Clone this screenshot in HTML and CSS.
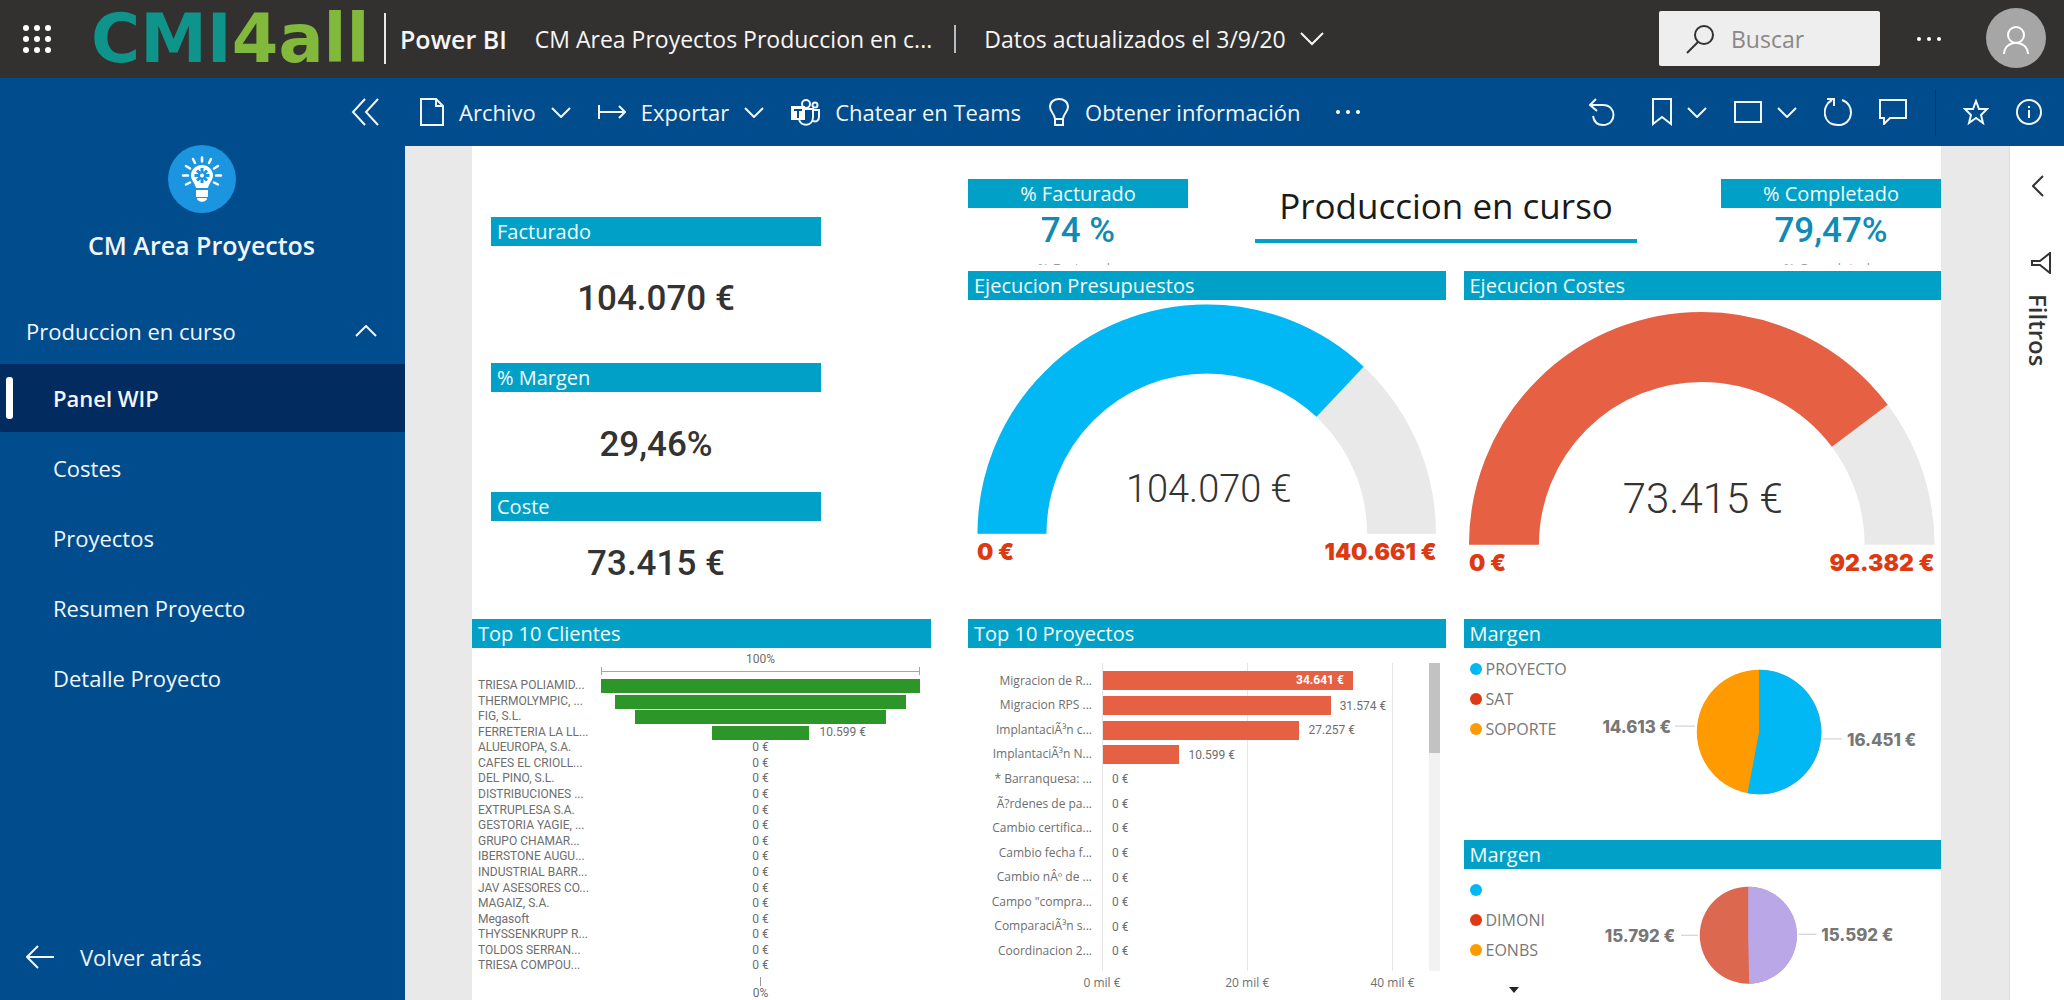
FILE: index.html
```html
<!DOCTYPE html>
<html lang="es">
<head>
<meta charset="utf-8">
<title>CM Area Proyectos - Power BI</title>
<meta name="viewport" content="width=device-width, initial-scale=1">
<link rel="stylesheet" href="styles.css">
</head>
<body>
<header class="topbar">
  <button class="icon-btn waffle" aria-label="Aplicaciones">
    <svg width="28" height="30" viewBox="0 0 28 30" fill="#fff"><circle cx="3" cy="4" r="3"/><circle cx="14" cy="4" r="3"/><circle cx="25" cy="4" r="3"/><circle cx="3" cy="15" r="3"/><circle cx="14" cy="15" r="3"/><circle cx="25" cy="15" r="3"/><circle cx="3" cy="26" r="3"/><circle cx="14" cy="26" r="3"/><circle cx="25" cy="26" r="3"/></svg>
  </button>
  <a class="logo" href="#"><span class="logo-cmi">CMI</span><span class="logo-all">4all</span></a>
  <a class="product" href="#">Power BI</a>
  <span class="report-name">CM Area Proyectos Produccion en c...</span>
  <button class="updated">Datos actualizados el 3/9/20
    <svg width="24" height="14" viewBox="0 0 24 14" class="line"><path d="M1 1l11 11L23 1"/></svg>
  </button>
  <label class="search">
    <svg width="28" height="30" viewBox="0 0 28 30" class="line"><circle cx="18" cy="11" r="9"/><path d="M12 18L1 29"/></svg>
    <input type="search" placeholder="Buscar" aria-label="Buscar">
  </label>
  <button class="icon-btn more" aria-label="Más opciones">
    <svg width="26" height="6" viewBox="0 0 26 6" fill="#fff"><circle cx="3" cy="3" r="2"/><circle cx="13" cy="3" r="2"/><circle cx="23" cy="3" r="2"/></svg>
  </button>
  <button class="icon-btn avatar" aria-label="Cuenta">
    <svg width="61" height="61" viewBox="0 0 61 61"><circle cx="30" cy="30" r="30" fill="#a6a6a6"/><g class="line"><circle cx="30" cy="27" r="8"/><path d="M18 46c1-15 23-15 24 0"/></g></svg>
  </button>
</header>

<div class="shell">
  <nav class="sidebar">
    <button class="icon-btn collapse" aria-label="Contraer">
      <svg width="28" height="28" viewBox="0 0 28 28" class="line"><path d="M14 1L2 14l12 13M27 1L15 14l12 13"/></svg>
    </button>
    <svg class="app-icon" width="68" height="68" viewBox="0 0 68 68"><circle cx="34" cy="34" r="34" fill="#1b95e0"/><g fill="#fff"><path d="M34 20c-6 0-11 4.500-11 10.500 0 5 4 7.500 5 12.500h12c1-5 5-7.500 5-12.500C45 24.500 40 20 34 20z"/><path d="M28 45h12v7H28zM29 53h10c0 5-10 5-10 0z"/></g><path d="M34 23v15M26.500 30.500h15M29 25.500l10 10M39 25.500l-10 10" stroke="#1b95e0" stroke-width="3"/><circle cx="34" cy="30.500" r="2" fill="#fff"/><g stroke="#fff" stroke-width="2.500" stroke-linecap="round"><path d="M34 12.500v4M25 14l2 4M43 14l-2 4M18 21l4 2.500M50 21l-4 2.500M15 30.500h5M48 30.500h5M18 39.500l4-2M50 39.500l-4-2"/></g></svg>
    <h1 class="app-name">CM Area Proyectos</h1>
    <button class="section">Produccion en curso
      <svg width="22" height="12" viewBox="0 0 22 12" class="line"><path d="M1 11L11 1l10 10"/></svg>
    </button>
    <ul class="pages">
      <li><a class="page current" href="#">Panel WIP</a></li>
      <li><a class="page" href="#">Costes</a></li>
      <li><a class="page" href="#">Proyectos</a></li>
      <li><a class="page" href="#">Resumen Proyecto</a></li>
      <li><a class="page" href="#">Detalle Proyecto</a></li>
    </ul>
    <a class="back" href="#">
      <svg width="28" height="24" viewBox="0 0 28 24" class="line"><path d="M28 12H2M12 1L1 12l11 11"/></svg>
      Volver atrás
    </a>
  </nav>

  <div class="content">
    <div class="toolbar">
      <button class="tool">
        <svg width="24" height="28" viewBox="0 0 24 28" class="line"><path d="M1 1h15l7 7v19H1zM16 1v7h7"/></svg>
        Archivo
        <svg width="20" height="11" viewBox="0 0 20 11" class="line"><path d="M1 1l9 9 9-9"/></svg>
      </button>
      <button class="tool">
        <svg width="28" height="14" viewBox="0 0 28 14" class="line"><path d="M1 0v14M1 7h26M21 1l6 6-6 6"/></svg>
        Exportar
        <svg width="20" height="11" viewBox="0 0 20 11" class="line"><path d="M1 1l9 9 9-9"/></svg>
      </button>
      <button class="tool">
        <svg width="29" height="27" viewBox="0 0 29 27" class="line"><circle cx="15" cy="5" r="4"/><circle cx="24" cy="6" r="2.500"/><path d="M13 10h9v8c0 10-13 10-14 2M22 11h6v7c0 4-3 5-6 4"/><path d="M0 7h14v14H0z" fill="#fff" stroke="none"/><path d="M3 11h8M7 11v8" stroke="#004c8c"/></svg>
        Chatear en Teams
      </button>
      <button class="tool">
        <svg width="22" height="28" viewBox="0 0 22 28" class="line"><path d="M7 21c0-5-5-7-5-12C2 4 6 1 11 1s9 3 9 8c0 5-5 7-5 12zM7 21v6h8v-6"/></svg>
        Obtener información
      </button>
      <button class="tool overflow" aria-label="Más">
        <svg width="26" height="6" viewBox="0 0 26 6" fill="#fff"><circle cx="3" cy="3" r="2"/><circle cx="13" cy="3" r="2"/><circle cx="23" cy="3" r="2"/></svg>
      </button>
      <div class="tools-right">
        <button class="tool undo" aria-label="Restablecer"><svg width="26" height="28" viewBox="0 0 26 28" class="line"><path d="M7 1L1 7l7 6M1 7h13c14 0 14 20 0 20-5 0-9-3-10-9"/></svg></button>
        <button class="tool" aria-label="Marcadores"><svg width="20" height="28" viewBox="0 0 20 28" class="line"><path d="M1 1h18v25l-9-7-9 7z"/></svg><svg width="20" height="11" viewBox="0 0 20 11" class="line"><path d="M1 1l9 9 9-9"/></svg></button>
        <button class="tool" aria-label="Vista"><svg width="28" height="22" viewBox="0 0 28 22" class="line"><path d="M1 1h26v20H1z"/></svg><svg width="20" height="11" viewBox="0 0 20 11" class="line"><path d="M1 1l9 9 9-9"/></svg></button>
        <button class="tool" aria-label="Actualizar"><svg width="28" height="28" viewBox="0 0 28 28" class="line"><path d="M18 2c13 4 12 25-4 25S-3 8 8 2M3 1h7v7"/></svg></button>
        <button class="tool comment" aria-label="Comentarios"><svg width="28" height="26" viewBox="0 0 28 26" class="line"><path d="M1 1h26v18H11l-6 6v-6H1z"/></svg></button>
        <button class="tool" aria-label="Favorito"><svg width="26" height="26" viewBox="0 0 26 26" class="line"><path d="M13 2l3 8h8l-6 6 2 8-7-5-7 5 2-8-6-6h8z"/></svg></button>
        <button class="tool" aria-label="Información"><svg width="26" height="26" viewBox="0 0 26 26" class="line"><circle cx="13" cy="13" r="12"/><path d="M13 11v8M13 7v2"/></svg></button>
      </div>
    </div>

    <div class="workspace">
      <main class="report">
        <div class="col-left">
          <section class="metric"><h2 class="bar-title">Facturado</h2><p class="number">104.070 €</p></section>
          <section class="metric"><h2 class="bar-title">% Margen</h2><p class="number">29,46%</p></section>
          <section class="metric"><h2 class="bar-title">Coste</h2><p class="number">73.415 €</p></section>

          <section class="clients">
            <h2 class="bar-title">Top 10 Clientes</h2>
            <div class="funnel">
              <div class="funnel-top">100%<span class="bracket"></span></div>
              <ul class="funnel-rows">
                <li><span class="name">TRIESA POLIAMID...</span><span class="lane"><i class="fill" style="width:100%"></i></span></li>
                <li><span class="name">THERMOLYMPIC, ...</span><span class="lane"><i class="fill" style="width:91.200%"></i></span></li>
                <li><span class="name">FIG, S.L.</span><span class="lane"><i class="fill" style="width:78.700%"></i></span></li>
                <li><span class="name">FERRETERIA LA LL...</span><span class="lane"><b class="side"></b><i class="fill" style="width:30.700%"></i><b class="side">10.599 €</b></span></li>
                <li><span class="name">ALUEUROPA, S.A.</span><span class="lane">0 €</span></li>
                <li><span class="name">CAFES EL CRIOLL...</span><span class="lane">0 €</span></li>
                <li><span class="name">DEL PINO, S.L.</span><span class="lane">0 €</span></li>
                <li><span class="name">DISTRIBUCIONES ...</span><span class="lane">0 €</span></li>
                <li><span class="name">EXTRUPLESA S.A.</span><span class="lane">0 €</span></li>
                <li><span class="name">GESTORIA YAGIE, ...</span><span class="lane">0 €</span></li>
                <li><span class="name">GRUPO CHAMAR...</span><span class="lane">0 €</span></li>
                <li><span class="name">IBERSTONE AUGU...</span><span class="lane">0 €</span></li>
                <li><span class="name">INDUSTRIAL BARR...</span><span class="lane">0 €</span></li>
                <li><span class="name">JAV ASESORES CO...</span><span class="lane">0 €</span></li>
                <li><span class="name">MAGAIZ, S.A.</span><span class="lane">0 €</span></li>
                <li><span class="name">Megasoft</span><span class="lane">0 €</span></li>
                <li><span class="name">THYSSENKRUPP R...</span><span class="lane">0 €</span></li>
                <li><span class="name">TOLDOS SERRAN...</span><span class="lane">0 €</span></li>
                <li><span class="name">TRIESA COMPOU...</span><span class="lane">0 €</span></li>
              </ul>
              <div class="funnel-bottom">0%</div>
            </div>
          </section>
        </div>

        <div class="col-right">
          <div class="headline">
            <section class="kpi"><h2 class="bar-title">% Facturado</h2><p class="kpi-value">74 %</p><p class="kpi-label">% Facturado</p></section>
            <h2 class="report-title">Produccion en curso</h2>
            <section class="kpi"><h2 class="bar-title">% Completado</h2><p class="kpi-value">79,47%</p><p class="kpi-label">% Completado</p></section>
          </div>

          <div class="charts">
            <section class="chart">
              <h2 class="bar-title">Ejecucion Presupuestos</h2>
              <svg class="gauge" viewBox="0 1 478 319">
                <path class="gauge-track" d="M44 235a195 195 0 0 1 390 0" stroke-width="69"/>
                <path d="M44 235a195 195 0 0 1 390 0" fill="none" stroke="#01b8f4" stroke-width="69" pathLength="100" stroke-dasharray="74 200"/>
                <text x="241" y="203" class="gauge-value">104.070 €</text>
                <text x="9" y="261" class="gauge-limit">0 €</text>
                <text x="469" y="261" class="gauge-limit end">140.661 €</text>
              </svg>
            </section>
            <section class="chart">
              <h2 class="bar-title">Ejecucion Costes</h2>
              <svg class="gauge" viewBox="0 1 478 319">
                <path class="gauge-track" d="M40 246a198 198 0 0 1 396 0" stroke-width="70"/>
                <path d="M40 246a198 198 0 0 1 396 0" fill="none" stroke="#e66043" stroke-width="70" pathLength="100" stroke-dasharray="79.470 200"/>
                <text x="239" y="214" class="gauge-value large">73.415 €</text>
                <text x="5" y="272" class="gauge-limit">0 €</text>
                <text x="471" y="272" class="gauge-limit end">92.382 €</text>
              </svg>
            </section>

            <section class="chart">
              <h2 class="bar-title">Top 10 Proyectos</h2>
              <div class="projects">
                <ul class="project-names">
                  <li>Migracion de R...</li><li>Migracion RPS ...</li><li>ImplantaciÃ³n c...</li><li>ImplantaciÃ³n N...</li><li>* Barranquesa: ...</li><li>Ã?rdenes de pa...</li><li>Cambio certifica...</li><li>Cambio fecha f...</li><li>Cambio nÂº de ...</li><li>Campo "compra...</li><li>ComparaciÃ³n s...</li><li>Coordinacion 2...</li>
                </ul>
                <div class="plot">
                  <ul class="project-bars">
                    <li><span class="hbar inside" style="width:86.600%">34.641 €</span></li>
                    <li><span class="hbar" style="width:78.900%"></span>31.574 €</li>
                    <li><span class="hbar" style="width:68.100%"></span>27.257 €</li>
                    <li><span class="hbar" style="width:26.500%"></span>10.599 €</li>
                    <li>0 €</li><li>0 €</li><li>0 €</li><li>0 €</li><li>0 €</li><li>0 €</li><li>0 €</li><li>0 €</li>
                  </ul>
                  <div class="axis"><span>0 mil €</span><span>20 mil €</span><span>40 mil €</span></div>
                </div>
                <div class="scroll"><div class="thumb"></div></div>
              </div>
            </section>

            <div class="chart">
              <section class="pie-block first">
                <h2 class="bar-title">Margen</h2>
                <div class="pie-body">
                  <ul class="legend"><li><i class="dot blue"></i>PROYECTO</li><li><i class="dot red"></i>SAT</li><li><i class="dot orange"></i>SOPORTE</li></ul>
                  <svg class="pie" viewBox="0 0 351 192">
                    <circle cx="167" cy="85" r="63" fill="#ff9a00"/>
                    <path d="M167 85V22a63 63 0 1 1-11.700 124.900z" fill="#01b8f4"/>
                    <path class="leader" d="M82 79h20M231 92h20"/>
                    <text x="78" y="86" class="pie-label end">14.613 €</text>
                    <text x="256" y="99" class="pie-label">16.451 €</text>
                  </svg>
                </div>
              </section>
              <section class="pie-block">
                <h2 class="bar-title">Margen</h2>
                <div class="pie-body">
                  <ul class="legend"><li><i class="dot blue"></i></li><li><i class="dot red"></i>DIMONI</li><li><i class="dot orange"></i>EONBS</li><li class="next"><button aria-label="Siguiente"></button></li></ul>
                  <svg class="pie" viewBox="0 0 351 131">
                    <circle cx="156" cy="67" r="49" fill="#dc6850"/>
                    <path d="M156 67V18a49 49 0 0 1 1 98z" fill="#baa7e8"/>
                    <path class="leader" d="M88 67h17M207 66h18"/>
                    <text x="82" y="74" class="pie-label end">15.792 €</text>
                    <text x="230" y="73" class="pie-label">15.592 €</text>
                  </svg>
                </div>
              </section>
            </div>
          </div>
        </div>
      </main>

      <aside class="filters">
        <button class="icon-btn" aria-label="Expandir"><svg width="12" height="22" viewBox="0 0 12 22" class="line"><path d="M11 1L1 11l10 10"/></svg></button>
        <svg class="line funnel-icon" width="20" height="22" viewBox="0 0 20 22"><path d="M19 1v20l-10-8H1V9h8z"/></svg>
        <h2 class="filters-title">Filtros</h2>
      </aside>
    </div>
  </div>
</div>
</body>
</html>
```

FILE: styles.css
```css
* { box-sizing: border-box; }

body {
  margin: 0;
  min-height: 100vh;
  display: flex;
  flex-direction: column;
  font-family: "Open Sans", "Noto Sans", sans-serif;
  font-size: 22px;
  color: #252423;
  background: #fff;
}

h1, h2, p, ul { margin: 0; padding: 0; }
ul { list-style: none; }
a { color: inherit; text-decoration: none; }
svg { display: block; flex: none; }

button {
  border: 0;
  padding: 0;
  background: none;
  color: inherit;
  font: inherit;
  white-space: nowrap;
}

.line { fill: none; stroke: currentColor; stroke-width: 2; }

/* Top bar */
.topbar {
  height: 78px;
  display: flex;
  align-items: center;
  padding: 0 17px 1px 23px;
  background: #323130;
  color: #f6f6f6;
  font-size: 23px;
  white-space: nowrap;
}

.logo {
  display: flex;
  width: 277px;
  margin: 0 16px 0 40px;
  font: bold 67px/64px "DejaVu Sans", sans-serif;
}
.logo-cmi { color: #0e948b; }
.logo-all { color: #82b83c; }

.product {
  display: flex;
  align-items: center;
  height: 51px;
  padding-left: 14px;
  border-left: 2px solid #e8e8e8;
  font-size: 25px;
  font-weight: 600;
}
.report-name { margin: 0 22px 0 28px; }
.updated {
  display: flex;
  align-items: center;
  gap: 14px;
  height: 28px;
  padding-left: 28px;
  border-left: 2px solid #b4bcc4;
}

.search {
  display: flex;
  align-items: center;
  gap: 17px;
  width: 221px;
  height: 55px;
  margin-left: auto;
  padding-left: 27px;
  background: #eee;
  border-radius: 2px;
  color: #323130;
}
.search input {
  flex: 1;
  min-width: 0;
  border: 0;
  padding: 0;
  background: none;
  font: inherit;
}
.search input::placeholder { color: #8a8886; opacity: 1; }
.more { margin: 0 44px 0 36px; }
.avatar { color: #fff; }

/* Sidebar */
.shell { flex: 1; display: flex; }

.sidebar {
  width: 405px;
  flex: none;
  display: flex;
  flex-direction: column;
  background: #004c8c;
  color: #f2f6fa;
}
.collapse {
  height: 67px;
  align-self: flex-end;
  margin-right: 26px;
}
.app-icon { align-self: center; margin-right: 2px; }
.app-name {
  margin-top: 16px;
  padding-right: 2px;
  font-size: 25px;
  line-height: 32px;
  font-weight: 600;
  text-align: center;
}
.section {
  display: flex;
  align-items: center;
  justify-content: space-between;
  height: 66px;
  margin-top: 37px;
  padding: 0 28px 0 26px;
}
.pages { display: grid; gap: 2px; }
.page {
  display: flex;
  align-items: center;
  height: 68px;
  padding-left: 53px;
}
.page.current {
  gap: 40px;
  padding-left: 6px;
  background: #022b60;
  font-weight: 600;
}
.page.current::before {
  content: "";
  width: 7px;
  height: 42px;
  border-radius: 3px;
  background: #fff;
}
.back {
  display: flex;
  align-items: center;
  gap: 26px;
  height: 68px;
  margin: auto 0 9px;
  padding-left: 26px;
}

/* Toolbar */
.content { flex: 1; min-width: 0; display: flex; flex-direction: column; }

.toolbar {
  height: 68px;
  display: flex;
  align-items: center;
  gap: 27px;
  padding: 0 22px 0 15px;
  background: #004c8c;
  color: #f2f6fa;
}
.tool { display: flex; align-items: center; gap: 15px; }
.overflow { margin-left: 8px; }
.tools-right {
  display: flex;
  align-items: center;
  gap: 27px;
  margin-left: auto;
}
.undo { margin-right: 10px; }
.comment {
  height: 47px;
  padding-right: 28px;
  border-right: 1px solid #00396b;
}

/* Report canvas */
.workspace { flex: 1; display: flex; background: #e9e9e9; }

.report {
  flex: 1;
  display: flex;
  gap: 37px;
  margin: 0 68px 0 67px;
  background: #fff;
}
.col-left { flex: 459 1 0; min-width: 0; padding-top: 71px; }
.col-right { flex: 973 1 0; min-width: 0; padding-top: 33px; }

.bar-title {
  height: 29px;
  padding: 0 6px;
  background: #01a1c7;
  color: #f4fbfd;
  font-size: 20px;
  line-height: 30px;
  font-weight: 400;
  white-space: nowrap;
}

.metric {
  height: 129px;
  margin: 0 110px 0 19px;
  text-align: center;
}
.metric:first-child { height: 146px; }
.metric .bar-title { text-align: left; }
.number, .kpi-value {
  font: 500 35px/46px Roboto, sans-serif;
}
.number { padding-top: 30px; color: #333; }
.metric:nth-child(3) { height: 127px; }
.metric:nth-child(3) .number { padding-top: 20px; }

.headline { display: flex; height: 92px; }
.kpi { width: 220px; text-align: center; }
.kpi:last-child { margin-left: auto; }
.kpi-value { color: #118ab5; }
.kpi-label {
  height: 11px;
  overflow: hidden;
  color: #999;
  font-size: 14px;
  line-height: 30px;
}
.report-title {
  width: 382px;
  height: 64px;
  margin-left: 67px;
  border-bottom: 4px solid #01a1c7;
  color: #1a1a1a;
  font-size: 35px;
  line-height: 54px;
  font-weight: 400;
  text-align: center;
  white-space: nowrap;
}

.charts {
  display: grid;
  grid-template-columns: 1fr 1fr;
  column-gap: 18px;
}
.chart { min-width: 0; }

/* Gauges */
.gauge { width: 100%; }
.gauge-track { fill: none; stroke: #e9e9e9; }
.gauge-value {
  font: 300 38px Roboto, sans-serif;
  fill: #333;
  text-anchor: middle;
}
.gauge-value.large { font-size: 42px; }
.gauge-limit { font: 900 23px Inter, sans-serif; fill: #dd3a14; }
.end { text-anchor: end; }

/* Clients funnel */
.funnel {
  padding: 3px 11px 0 6px;
  color: #6e6e6e;
  font: 12px/16px Roboto, sans-serif;
}
.funnel-top, .funnel-bottom { margin-left: 123px; text-align: center; }
.bracket {
  display: block;
  height: 8px;
  margin-bottom: 3px;
  border: solid #a6a6a6;
  border-width: 0 1px;
  background: linear-gradient(#a6a6a6, #a6a6a6) 0 4px / 100% 1px no-repeat;
}
.funnel-rows { display: grid; grid-auto-rows: 1fr; height: 296px; }
.funnel-rows li { display: flex; min-height: 0; line-height: 15px; }
.name { width: 123px; flex: none; }
.lane { flex: 1; display: flex; justify-content: center; }
.fill { height: 14px; margin-top: 1px; background: #2c9728; }
.side { flex: 1; padding-left: 10px; font-weight: 400; }
.funnel-bottom { line-height: 14px; }
.funnel-bottom::before {
  content: "";
  display: block;
  width: 1px;
  height: 9px;
  margin: 3px auto 0;
  background: #999;
}

/* Projects bar chart */
.projects {
  display: flex;
  padding: 15px 6px 0 0;
  color: #6e6e6e;
  font-size: 12px;
}
.project-names, .project-bars {
  display: grid;
  grid-auto-rows: 1fr;
  height: 308px;
  padding: 6px 0 7px;
}
.project-names { width: 124px; flex: none; margin-right: 10px; text-align: right; }
.project-names li { line-height: 24px; white-space: nowrap; }
.plot { flex: 1; margin-right: 36px; }
.project-bars {
  border: solid #e6e6e6;
  border-width: 0 1px;
  background: linear-gradient(#e6e6e6, #e6e6e6) 50% 0 / 1px 100% no-repeat;
  font-family: Roboto, sans-serif;
}
.project-bars li { display: flex; align-items: center; gap: 9px; white-space: nowrap; }
.project-bars li:nth-child(n + 5) { padding-left: 9px; }
.hbar { height: 19px; background: #e66043; }
.hbar.inside {
  padding-right: 9px;
  color: #fff;
  font-weight: 700;
  line-height: 19px;
  text-align: right;
}
.axis {
  display: flex;
  justify-content: space-between;
  margin: 0 -30px;
  line-height: 24px;
}
.axis span { width: 60px; text-align: center; }
.scroll { width: 11px; height: 308px; background: #f2f2f2; }
.thumb { height: 90px; background: #c2c2c2; }

/* Pies */
.pie-block.first { height: 221px; }
.pie-body { display: flex; }
.legend {
  flex: 126 1 0;
  padding: 6px 0 0 6px;
  color: #777;
  font-size: 16px;
}
.legend li { display: flex; align-items: center; gap: 4px; height: 30px; }
.dot { width: 12px; height: 12px; border-radius: 50%; }
.blue { background: #01b8f4; }
.red { background: #dd3a14; }
.orange { background: #ff9a00; }
.legend .next { align-items: flex-start; padding: 22px 0 0 39px; }
.next button {
  border: solid transparent;
  border-width: 6px 5px 0;
  border-top-color: #252423;
}
.pie { flex: 351 1 0; min-width: 0; align-self: flex-start; }
.pie-label { font: 800 17px Inter, sans-serif; fill: #777; }
.leader { stroke: #c8c8c8; stroke-width: 1; }

/* Filter pane */
.filters {
  width: 55px;
  display: flex;
  flex-direction: column;
  align-items: center;
  padding: 29px 0 0 1px;
  background: #fff;
  border-left: 1px solid #dcdcdc;
  color: #333;
}
.funnel-icon { margin: 55px 0 20px 6px; }
.filters-title {
  writing-mode: vertical-rl;
  font-size: 24px;
  line-height: 30px;
  font-weight: 600;
}
```
